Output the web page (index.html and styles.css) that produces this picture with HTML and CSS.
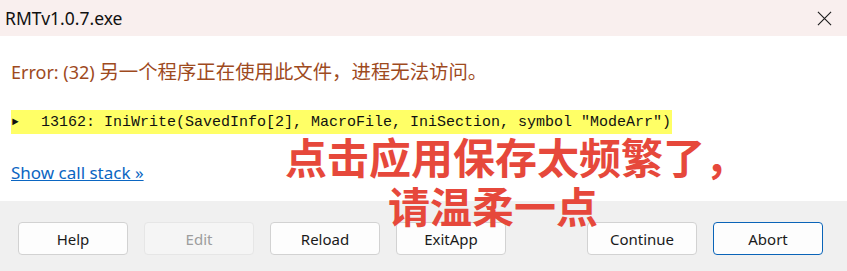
FILE: index.html
```html
<!DOCTYPE html>
<html lang="zh-CN">
<head>
    <meta charset="UTF-8">
    <title>RMTv1.0.7.exe</title>
    <link rel="stylesheet" href="styles.css">
</head>
<body>
    <div class="dialog">
        <div class="titlebar">
            <span class="title">RMTv1.0.7.exe</span>
            <svg class="close-icon" viewBox="0 0 16 16">
                <path d="M1 1L15 15M15 1L1 15" stroke="#1c1c1c" stroke-width="1.2" fill="none"></path>
            </svg>
        </div>

        <div class="content">
            <p class="error-msg">Error: (32) <span class="cjk">另一个程序正在使用此文件，进程无法访问。</span></p>
            <div class="code-line">
                <span class="arrow">&#9658;</span>
                <span class="code">13162: IniWrite(SavedInfo[2], MacroFile, IniSection, symbol "ModeArr")</span>
            </div>
            <a class="stack-link" href="#">Show call stack &raquo;</a>
        </div>

        <div class="footer">
            <div class="btn-group">
                <button class="btn">Help</button>
                <button class="btn" disabled>Edit</button>
                <button class="btn">Reload</button>
                <button class="btn">ExitApp</button>
            </div>
            <div class="btn-group">
                <button class="btn">Continue</button>
                <button class="btn btn-default">Abort</button>
            </div>
        </div>

        <div class="overlay-note">
            <div class="note-line">点击应用保存太频繁了，</div>
            <div class="note-line second">请温柔一点</div>
        </div>
    </div>
</body>
</html>
```

FILE: styles.css
```css
* {
    margin: 0;
    padding: 0;
    box-sizing: border-box;
}

body {
    font-family: "Noto Sans", "Noto Sans CJK SC", sans-serif;
    background: white;
}

.dialog {
    position: relative;
    width: 847px;
    height: 271px;
    overflow: hidden;
}

.titlebar {
    height: 36px;
    background: #f9efee;
    display: flex;
    align-items: center;
    justify-content: space-between;
    padding: 0 15px 0 5px;
}

.title {
    font-size: 17.5px;
    color: #111;
}

.close-icon {
    width: 15px;
    height: 15px;
}

.content {
    padding: 24px 11px 17px;
    height: 165px;
}

.error-msg {
    font-size: 18px;
    line-height: 24px;
    color: #9e4a1e;
}

.error-msg .cjk {
    font-size: 19.4px;
}

.code-line {
    margin-top: 26px;
    height: 24px;
    width: 661px;
    background: #ffff66;
    display: flex;
    align-items: center;
    font-family: "Liberation Mono", "Noto Sans CJK JP", monospace;
    font-size: 15px;
    color: #111;
}

.arrow {
    font-size: 11px;
    width: 30px;
    padding-left: 1px;
}

.stack-link {
    display: inline-block;
    margin-top: 27px;
    font-size: 17px;
    line-height: 24px;
    color: #0b66c2;
    text-decoration: underline;
}

.footer {
    height: 70px;
    background: #f0f0f0;
    display: flex;
    justify-content: space-between;
    padding: 21px 24px 0 18px;
}

.btn-group {
    display: flex;
    gap: 16px;
}

.btn {
    width: 110px;
    height: 33px;
    background: #fdfdfd;
    border: 1px solid #d2d2d2;
    border-radius: 4px;
    font-family: "Noto Sans", sans-serif;
    font-size: 15px;
    color: #1a1a1a;
}

.btn:disabled {
    background: #f5f5f5;
    border-color: #e6e6e6;
    color: #9d9d9d;
}

.btn-default {
    border-color: #0a64b8;
}

.overlay-note {
    position: absolute;
    left: 285px;
    top: 134px;
    font-family: "Noto Sans CJK SC", sans-serif;
    font-weight: 700;
    font-size: 42px;
    line-height: 44px;
    color: #e6483b;
}

.note-line.second {
    margin-top: 5px;
    padding-left: 103px;
}
```
